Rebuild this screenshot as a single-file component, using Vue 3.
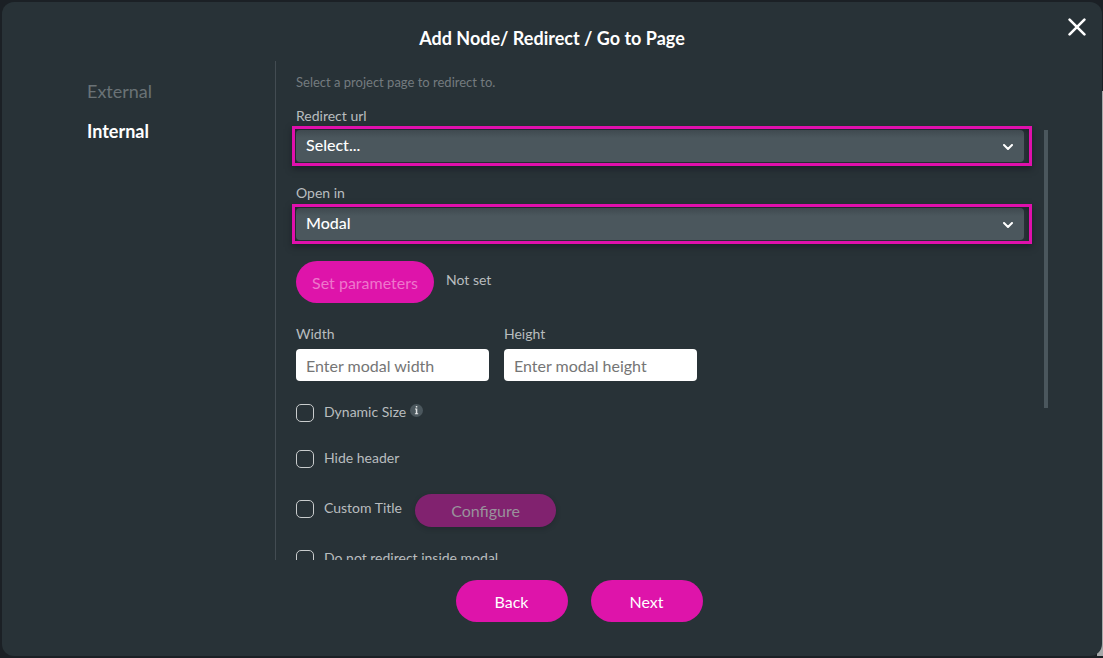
<script setup>
import { ref } from 'vue'

const tabs = ['External', 'Internal']
const activeTab = ref('Internal')

const pages = ['Select...']
const targets = ['Modal', 'Same window', 'New tab']
const redirectUrl = ref('Select...')
const openIn = ref('Modal')

const width = ref('')
const height = ref('')
const dynamicSize = ref(false)
const hideHeader = ref(false)
const customTitle = ref(false)
const keepOutside = ref(false)
</script>

<template>
  <div class="backdrop">
    <section class="dialog" role="dialog" aria-labelledby="dialog-title">
      <header class="header">
        <h1 id="dialog-title" class="title">Add Node/ Redirect / Go to Page</h1>
        <button class="close" type="button" aria-label="Close">
          <svg width="18" height="18" viewBox="0 0 18 18" fill="none" stroke="#fff" stroke-width="2.6" stroke-linecap="round">
            <path d="M1.6 1.6 16.4 16.4M16.4 1.6 1.6 16.4" />
          </svg>
        </button>
      </header>

      <div class="body">
        <nav class="tabs">
          <a
            v-for="tab in tabs"
            :key="tab"
            href="#"
            class="tab"
            :class="{ active: tab === activeTab }"
            @click.prevent="activeTab = tab"
          >{{ tab }}</a>
        </nav>

        <form class="content" @submit.prevent>
          <p class="hint">Select a project page to redirect to.</p>

          <div class="field">
            <label class="label" for="redirect-url">Redirect url</label>
            <div class="frame">
              <select id="redirect-url" v-model="redirectUrl" class="select">
                <option v-for="p in pages" :key="p">{{ p }}</option>
              </select>
              <svg class="chevron" width="10" height="6" viewBox="0 0 10 6" fill="none" stroke="#fff" stroke-width="2" stroke-linecap="round" stroke-linejoin="round">
                <path d="M1 1l4 4 4-4" />
              </svg>
            </div>
          </div>

          <div class="field">
            <label class="label" for="open-in">Open in</label>
            <div class="frame">
              <select id="open-in" v-model="openIn" class="select">
                <option v-for="t in targets" :key="t">{{ t }}</option>
              </select>
              <svg class="chevron" width="10" height="6" viewBox="0 0 10 6" fill="none" stroke="#fff" stroke-width="2" stroke-linecap="round" stroke-linejoin="round">
                <path d="M1 1l4 4 4-4" />
              </svg>
            </div>
          </div>

          <div class="params">
            <button class="pill set" type="button">Set parameters</button>
            <span class="status">Not set</span>
          </div>

          <div class="sizes">
            <div class="size">
              <label class="label" for="modal-width">Width</label>
              <input id="modal-width" v-model="width" class="input" type="text" placeholder="Enter modal width">
            </div>
            <div class="size">
              <label class="label" for="modal-height">Height</label>
              <input id="modal-height" v-model="height" class="input" type="text" placeholder="Enter modal height">
            </div>
          </div>

          <div class="checks">
            <div class="check">
              <input id="dynamic-size" v-model="dynamicSize" class="box" type="checkbox">
              <label class="check-label" for="dynamic-size">Dynamic Size</label>
              <svg class="info" width="13" height="13" viewBox="0 0 13 13">
                <circle cx="6.5" cy="6.5" r="6.5" fill="#4b575d" />
                <path d="M5.8 2h1.5v1.4H5.8zM5 4.6h2.3v4.6H8.2v1H4.9v-1h.9V5.6H5z" fill="#e2e4e5" />
              </svg>
            </div>
            <div class="check">
              <input id="hide-header" v-model="hideHeader" class="box" type="checkbox">
              <label class="check-label" for="hide-header">Hide header</label>
            </div>
            <div class="check tall">
              <input id="custom-title" v-model="customTitle" class="box" type="checkbox">
              <label class="check-label" for="custom-title">Custom Title</label>
              <button class="pill configure" type="button" disabled>Configure</button>
            </div>
            <div class="check">
              <input id="no-redirect" v-model="keepOutside" class="box" type="checkbox">
              <label class="check-label" for="no-redirect">Do not redirect inside modal</label>
            </div>
          </div>

          <div class="thumb"></div>
        </form>
      </div>

      <footer class="footer">
        <button class="pill action" type="button">Back</button>
        <button class="pill action" type="button">Next</button>
      </footer>
    </section>
  </div>
</template>

<style>
body {
  background: #1b2025;
}
</style>

<style scoped>
* {
  box-sizing: border-box;
}

.backdrop {
  height: 100vh;
  padding: 2px 1px 2px 2px;
  background: linear-gradient(#a5a8a9, #a5a8a9) right 91px / 6px calc(100% - 93px) no-repeat;
  background-position: right 0 top 91px;
  background-color: #1b2025;
  font-family: Lato, "Liberation Sans", sans-serif;
  color: #b9bdbf;
}

.dialog {
  display: flex;
  flex-direction: column;
  height: 100%;
  border-radius: 12px;
  background: #283237;
}

.header {
  position: relative;
  flex: none;
  height: 59px;
  padding-top: 24px;
  text-align: center;
}

.title {
  margin: 0;
  font-size: 18px;
  line-height: 24px;
  font-weight: 700;
  color: #fff;
}

.close {
  position: absolute;
  top: 16px;
  right: 16px;
  display: flex;
  padding: 0;
  border: 0;
  background: none;
}

.body {
  display: flex;
  flex: 1;
  min-height: 0;
}

.tabs {
  display: flex;
  flex: none;
  flex-direction: column;
  gap: 16px;
  width: 273px;
  padding: 18px 0 0 85px;
}

.tab {
  font-size: 18px;
  line-height: 24px;
  color: #6a7276;
  text-decoration: none;
}

.tab.active {
  font-weight: 700;
  color: #fff;
}

.content {
  position: relative;
  flex: 1;
  padding: 11px 70px 0 20px;
  border-left: 1px solid #434c52;
  overflow: hidden;
}

.hint {
  margin: 0 0 14px;
  font-size: 13px;
  line-height: 20px;
  color: #747b7f;
}

.field {
  margin-bottom: 17px;
}

.label {
  display: block;
  font-size: 14px;
  line-height: 20px;
}

.field + .field .label {
  padding-bottom: 1px;
}

.frame {
  position: relative;
  margin-left: -4px;
  padding: 1px 5px 1px 1px;
  border: 3px solid #e010ac;
  box-shadow: 0 3px 6px rgba(15, 18, 25, 0.5), inset 0 2px 5px rgba(15, 18, 25, 0.4);
}

.select {
  display: block;
  width: 100%;
  height: 32px;
  padding: 0 30px 3px 10px;
  border: 0;
  border-radius: 4px;
  appearance: none;
  background: linear-gradient(#3f494f, #4b575d 8px);
  font: 500 16px Lato, "Liberation Sans", sans-serif;
  color: #fff;
}

.chevron {
  position: absolute;
  top: 15px;
  right: 16px;
  pointer-events: none;
}

.params {
  display: flex;
  gap: 12px;
}

.pill {
  padding: 0;
  border: 0;
  border-radius: 21px;
  background: #de14aa;
  font: 16px Lato, "Liberation Sans", sans-serif;
  color: #fff;
}

.set {
  width: 138px;
  height: 42px;
  color: #ee76cc;
}

.status {
  padding-top: 9px;
  font-size: 14px;
  line-height: 20px;
}

.sizes {
  display: flex;
  gap: 15px;
  margin-top: 21px;
}

.size {
  display: flex;
  flex-direction: column;
  gap: 5px;
  width: 193px;
}

.input {
  width: 100%;
  height: 32px;
  padding: 0 10px;
  border: 0;
  border-radius: 4px;
  background: #fff;
  font: 16px Lato, "Liberation Sans", sans-serif;
  color: #283237;
}

.input::placeholder {
  color: #757575;
  opacity: 1;
}

.checks {
  display: flex;
  flex-direction: column;
  gap: 24px;
  padding-top: 22px;
}

.check {
  display: flex;
  align-items: center;
  height: 20px;
  margin-bottom: 2px;
}

.check.tall {
  height: 34px;
  margin: -3px 0 -1px;
}

.box {
  flex: none;
  width: 18px;
  height: 18px;
  margin: 0 10px 0 0;
  border: 1px solid #c9cccd;
  border-radius: 5px;
  appearance: none;
  background: transparent;
}

.check-label {
  padding-bottom: 2px;
  font-size: 14px;
  line-height: 18px;
}

.info {
  margin: 0 0 5px 4px;
}

.configure {
  width: 141px;
  height: 33px;
  margin: 2px 0 0 13px;
  background: #81226f;
  color: #99929c;
  box-shadow: 0 2px 5px rgba(15, 18, 25, 0.25);
}

.thumb {
  position: absolute;
  top: 69px;
  right: 54px;
  width: 4px;
  height: 278px;
  background: #4b575d;
}

.footer {
  display: flex;
  flex: none;
  justify-content: center;
  gap: 23px;
  padding: 20px 0 34px 54px;
}

.action {
  width: 112px;
  height: 42px;
}
</style>
